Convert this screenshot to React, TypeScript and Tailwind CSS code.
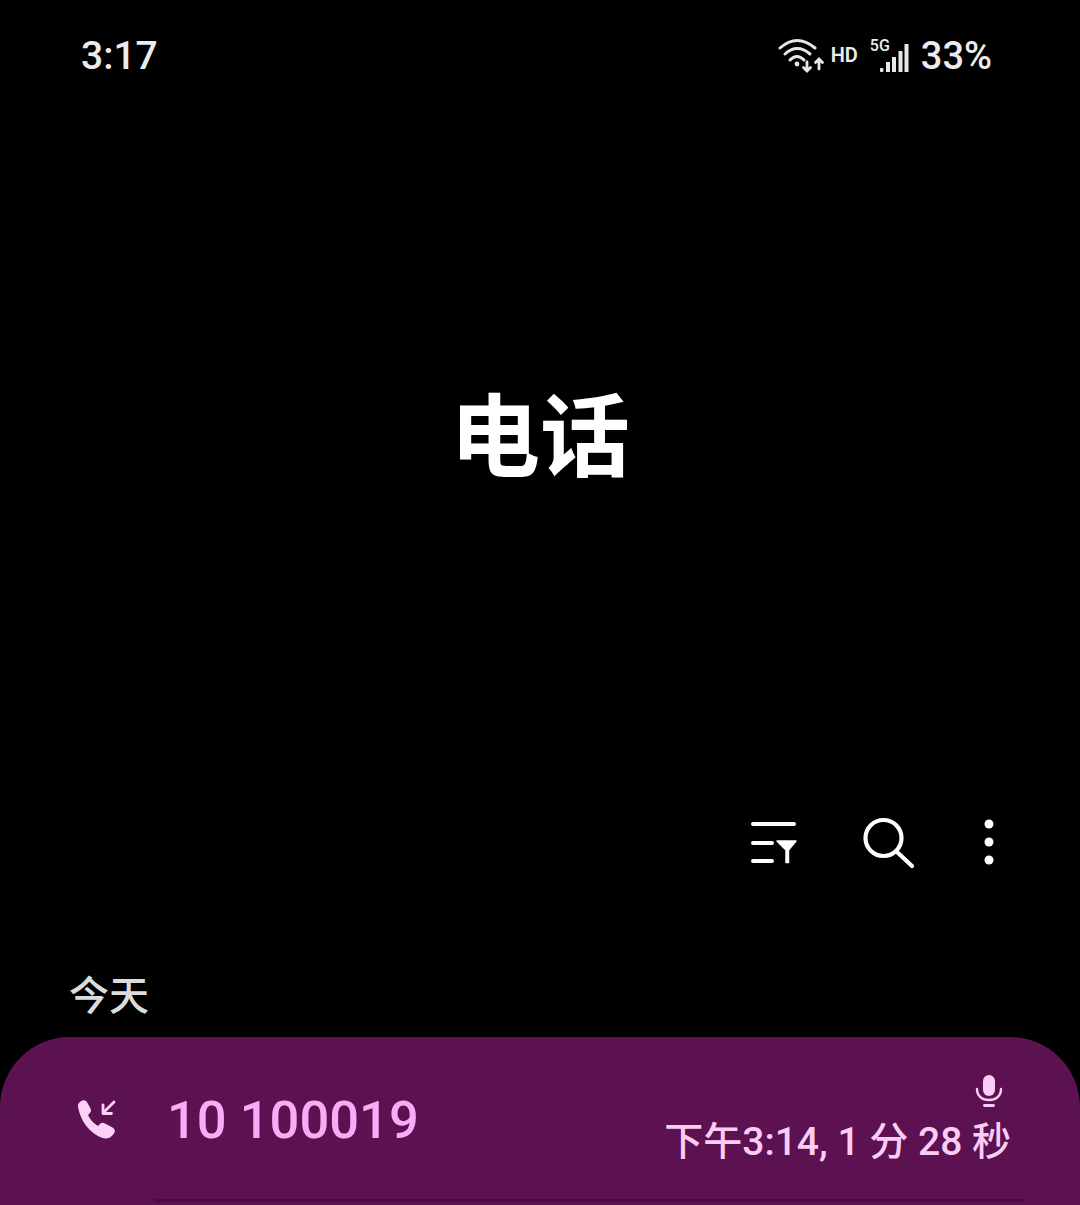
const FONT = "font-['Roboto','Noto_Sans_CJK_SC',sans-serif]";

function WifiIcon() {
  return (
    <svg width="48" height="38" viewBox="0 0 48 38" fill="none" stroke="#e8e8e8" strokeLinecap="round">
      <path d="M2 12 Q19 -3 37 12" strokeWidth="3" />
      <path d="M7 18 Q19 7 32 18" strokeWidth="3" />
      <path d="M12 24 Q19 17 26 24" strokeWidth="3" />
      <circle cx="19" cy="28" r="2.400" fill="#e8e8e8" stroke="none" />
      <path d="M29 26V35M25.500 31.500L29 35L32.500 31.500" strokeWidth="2.800" />
      <path d="M41 33V23M37.500 26.500L41 23L44.500 26.500" strokeWidth="2.800" />
    </svg>
  );
}

function SignalIcon() {
  return (
    <svg width="30" height="30" viewBox="0 0 30 30" fill="#e8e8e8">
      <rect x="1" y="25" width="3.400" height="4" rx="1" />
      <rect x="7" y="19" width="4" height="10" />
      <rect x="13" y="14" width="4" height="15" />
      <rect x="19.500" y="8" width="4" height="21" />
      <rect x="25.500" y="1" width="4" height="28" />
    </svg>
  );
}

function FilterIcon() {
  return (
    <svg width="48" height="54" viewBox="0 0 48 54" fill="none" stroke="#fff" strokeWidth="4" strokeLinecap="round">
      <path d="M3 9H44M3 28H22M3 46H22" />
      <path d="M27 26H46L38.500 35V47.500H36V35Z" fill="#fff" strokeWidth="1.500" strokeLinejoin="round" />
    </svg>
  );
}

function SearchIcon() {
  return (
    <svg width="54" height="54" viewBox="0 0 54 54" fill="none" stroke="#fff" strokeWidth="4.200" strokeLinecap="round">
      <circle cx="21.500" cy="23" r="18" />
      <path d="M35 37L50 51" />
    </svg>
  );
}

function MoreIcon() {
  return (
    <svg width="18" height="54" viewBox="0 0 18 54" fill="#fff">
      <circle cx="9" cy="9" r="4.500" />
      <circle cx="9" cy="27" r="4.500" />
      <circle cx="9" cy="45" r="4.500" />
    </svg>
  );
}

function IncomingCallIcon() {
  return (
    <svg width="42" height="42" viewBox="0 0 42 42" fill="none">
      <path
        d="M2 8C1.500 5 3.500 2.500 6.500 1.500C9 1 10.500 2 11.500 4L14.500 9.500C15.500 11.500 15 13 13.500 14.500L12 16C14 20.500 17.500 24.500 22 27L24 25C25.500 23.500 27 23.500 29 24.500L36.500 28.500C39 30 39.500 32 38 34.500C35.500 38.500 31 40.500 26.500 39C14 34.500 4.500 22.500 2 8Z"
        fill="#fdd0f8"
      />
      <path d="M38 3L27.500 13.500M27 6V14.500H35.500" stroke="#fdd0f8" strokeWidth="2.800" strokeLinecap="round" strokeLinejoin="round" />
    </svg>
  );
}

function MicIcon() {
  return (
    <svg width="30" height="34" viewBox="0 0 30 34" fill="none" stroke="#fbcdf5" strokeWidth="2.400" strokeLinecap="round">
      <rect x="9" y="1" width="12" height="21" rx="6" fill="#fbcdf5" stroke="none" />
      <path d="M3 15C3 22 8 26 15 26C22 26 27 22 27 15" />
      <path d="M10.500 31.500H19.500" strokeWidth="2.800" />
    </svg>
  );
}

export default function App() {
  return (
    <div className={`h-[1205px] overflow-hidden bg-black ${FONT}`}>
      {/* Status bar */}
      <div className="flex h-[110px] items-center justify-between pl-[81px] pr-[88px] text-[#ececec]">
        <span className="mt-[2px] text-[39px] font-medium leading-none">3:17</span>
        <div className="flex items-center">
          <WifiIcon />
          <span className="ml-[5px] text-[20px] font-semibold leading-none">HD</span>
          <div className="relative ml-[12px] h-[35px] w-[39px]">
            <span className="absolute left-0 top-0 text-[16px] font-medium leading-none">5G</span>
            <div className="absolute bottom-0 right-0">
              <SignalIcon />
            </div>
          </div>
          <span className="ml-[12px] mt-[2px] text-[38px] font-medium leading-none">33%</span>
        </div>
      </div>

      {/* Title */}
      <div className="flex h-[652px] items-center justify-center pt-[5px]">
        <h1 className="text-[90px] font-semibold leading-none text-white">电话</h1>
      </div>

      {/* Toolbar */}
      <div className="flex h-[160px] items-start justify-end gap-[64px] pr-[82px] pt-[53px]">
        <FilterIcon />
        <SearchIcon />
        <MoreIcon />
      </div>

      {/* Section label */}
      <div className="flex h-[115px] items-center pl-[69px] pt-[35px]">
        <span className="text-[40px] font-medium leading-none text-[#dcdcdc]">今天</span>
      </div>

      {/* Call log row */}
      <div className="rounded-t-[70px] bg-[#5c1150] pb-[10px]">
        <div className="flex h-[162px] items-start justify-between pl-[76px] pr-[69px] pt-[36px]">
          <div className="flex items-center pt-[21px]">
            <IncomingCallIcon />
            <span className="ml-[49px] text-[52.500px] font-medium leading-none text-[#fcaaf8]">10 100019</span>
          </div>
          <div className="flex flex-col items-end">
            <div className="mr-[7px] mt-[1px]">
              <MicIcon />
            </div>
            <span className="mt-[15px] text-[39px] font-medium leading-none text-[#fbcdf5]">下午3:14, 1 分 28 秒</span>
          </div>
        </div>
        <div className="ml-[154px] mr-[56px] h-[3px] bg-[#470d3e]" />
      </div>
    </div>
  );
}
